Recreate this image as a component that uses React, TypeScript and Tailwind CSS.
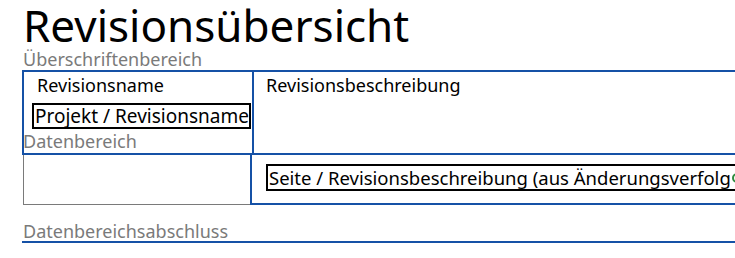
import React from 'react'

const Label = ({ children, className = '' }: { children: React.ReactNode; className?: string }) => (
    <div className={`text-[18px] leading-[19px] text-[#7a7a7a] ${className}`}>{children}</div>
)

const App = () => {
    return (
        <div className="w-[735px] h-[258px] overflow-hidden bg-white font-['Noto_Sans',sans-serif] text-black">
            <div className="pl-[22px] w-[900px]">
                <h1 className="pl-[1px] text-[44px] leading-[50px]">Revisionsübersicht</h1>
                <Label className="pl-[1px]">Überschriftenbereich</Label>

                {/* header area */}
                <div className="mt-[1px] flex border-t-2 border-l-2 border-b-2 border-[#1551a6] h-[85px]">
                    <div className="w-[228px] flex flex-col relative">
                        <div className="pl-[13px] pt-[2px] text-[18px] leading-[22px]">Revisionsname</div>
                        <div className="ml-[8px] mt-[7px] w-[219px] h-[26px] border-2 border-black text-[19px] leading-[22px] pl-[1px] relative z-10 bg-white whitespace-nowrap overflow-hidden">Projekt / Revisionsname</div>
                        <Label className="mt-[3px] -ml-[1px]">Datenbereich</Label>
                    </div>
                    <div className="flex-1 border-l-2 border-[#1551a6] pl-[12px] pt-[2px] text-[18px] leading-[22px]">Revisionsbeschreibung</div>
                </div>

                {/* data row */}
                <div className="flex h-[50px]">
                    <div className="w-[228px] ml-[1px] -mr-[1px] border-l border-b border-[#7a7a7a]"></div>
                    <div className="flex-1 border-l-2 border-b-2 border-[#1551a6] pt-[9px] pl-[14px]">
                        <div className="h-[27px] border-2 border-black text-[18.5px] leading-[22px] pl-[1px] whitespace-nowrap flex items-center">
                            Seite / Revisionsbeschreibung (aus Änderungsverfolg
                            <span className="ml-[1px] inline-block w-[10px] h-[10px] rounded-full border-2 border-[#2e8b3e]"></span>
                        </div>
                    </div>
                </div>

                {/* footer */}
                <Label className="mt-[17px] pl-[1px]">Datenbereichsabschluss</Label>
                <div className="h-[2px] bg-[#1551a6]"></div>
            </div>
        </div>
    )
}

export default App
